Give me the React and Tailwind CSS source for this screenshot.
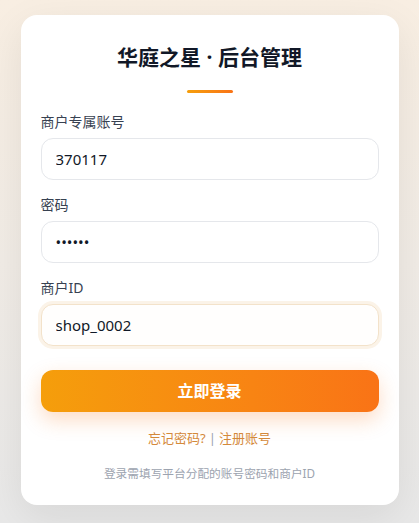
import React from "react";

const font = { fontFamily: '"Noto Sans", "Noto Sans CJK SC", sans-serif' };

function Field({ label, value, type = "text", focused = false }) {
  return (
    <div className="flex flex-col gap-[6px]">
      <label className="text-[14px] leading-5 text-[#374151]">{label}</label>
      <input
        readOnly
        type={type}
        value={value}
        className={
          "h-[42px] w-full rounded-xl border px-[14px] text-[15px] text-[#111827] outline-none " +
          (focused
            ? "border-[#f3e2ca] bg-[#fffefd] ring-[3px] ring-[#fbf3e8]"
            : "border-[#e5e7eb] bg-white")
        }
        style={font}
      />
    </div>
  );
}

export default function App() {
  return (
    <div
      className="flex min-h-screen items-start justify-center bg-gradient-to-b from-[#f8eee2] via-[#f1ece6] to-[#e8e8e8] pt-[15px] pb-[18px]"
      style={font}
    >
      <div className="w-[378px] rounded-2xl bg-white px-5 pt-7 pb-[22px] shadow-[0_12px_40px_rgba(0,0,0,0.08)]">
        <h1 className="text-center text-[21px] font-bold leading-7 text-[#111827]">
          华庭之星 · 后台管理
        </h1>
        <div className="mx-auto mt-[19px] h-[3px] w-[46px] rounded-full bg-gradient-to-r from-[#f59e0b] to-[#f97316]" />
        <div className="mt-[19px] flex flex-col gap-[15px]">
          <Field label="商户专属账号" value="370117" />
          <Field label="密码" value="370117" type="password" />
          <Field label="商户ID" value="shop_0002" focused />
        </div>
        <button className="mt-6 h-[42px] w-full rounded-xl bg-gradient-to-r from-[#f59e0b] to-[#f97316] text-[16px] font-bold text-white shadow-[0_8px_20px_rgba(249,115,22,0.25)]">
          立即登录
        </button>
        <div className="mt-4 text-center text-[13px] leading-5 text-[#d4893a]">
          <span>忘记密码?</span>
          <span className="mx-[3px] text-[#9ca3af]">|</span>
          <span>注册账号</span>
        </div>
        <p className="mt-[15px] text-center text-[11.7px] leading-5 text-[#9ca3af]">
          登录需填写平台分配的账号密码和商户ID
        </p>
      </div>
    </div>
  );
}
